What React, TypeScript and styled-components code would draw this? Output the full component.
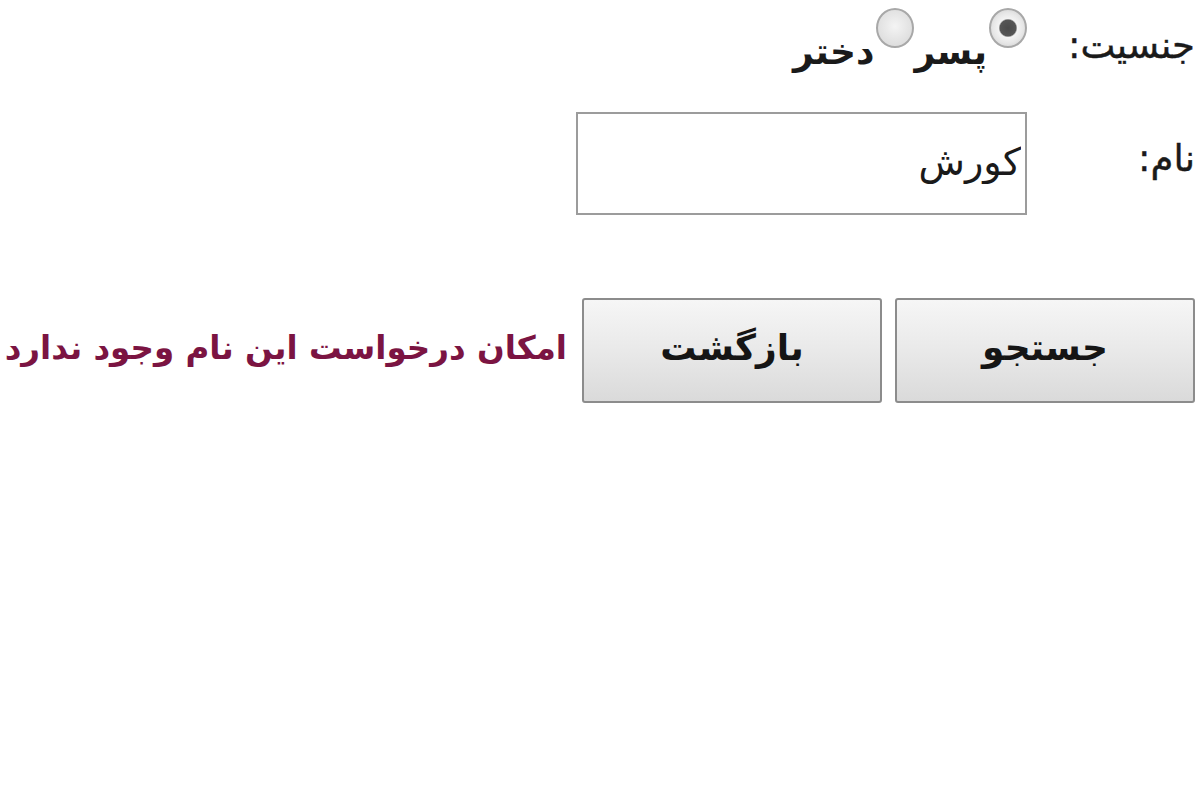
import styled, { createGlobalStyle } from 'styled-components';

const GlobalStyle = createGlobalStyle`
  html, body {
    margin: 0;
    padding: 0;
    background: #ffffff;
  }
  body {
    font-family: "DejaVu Sans", "Noto Sans", sans-serif;
    color: #1a1a1a;
  }
`;

const Form = styled.form`
  direction: rtl;
  width: 1200px;
  padding: 0 5px 0 0;
  box-sizing: border-box;
`;

const Row = styled.div<{ $height: number; $align?: string }>`
  display: grid;
  grid-template-columns: 168px auto;
  align-items: ${(p) => p.$align || 'center'};
  height: ${(p) => p.$height}px;
`;

const Label = styled.label<{ $top?: number }>`
  font-size: 37px;
  white-space: nowrap;
  padding-top: ${(p) => p.$top || 0}px;
  -webkit-text-stroke: 0.4px #1a1a1a;
`;

const Options = styled.div`
  display: flex;
  align-items: flex-start;
  padding-top: 8px;
`;

const Option = styled.label`
  display: flex;
  align-items: flex-start;
  font-size: 36px;
  font-weight: bold;
  line-height: 1;
  white-space: nowrap;
`;

const OptionText = styled.span`
  padding-top: 26px;
`;

const Radio = styled.input.attrs({ type: 'radio' })`
  appearance: none;
  margin: 0 0 0 2px;
  width: 38px;
  height: 40px;
  border-radius: 50%;
  border: 2px solid #a8a8a8;
  background: radial-gradient(circle at 50% 45%, #f4f4f4 0%, #dcdcdc 80%);
  box-sizing: border-box;

  &:checked {
    background: radial-gradient(
      circle,
      #4a4a4a 0,
      #555 32%,
      #f3f3f3 38%,
      #e6e6e6 62%,
      #c4c4c4 100%
    );
  }
`;

const TextBox = styled.input`
  width: 451px;
  height: 103px;
  box-sizing: border-box;
  border: 2px solid #9c9c9c;
  padding: 0 4px 2px;
  margin-top: 10px;
  font-family: "DejaVu Sans", sans-serif;
  font-size: 38px;
  color: #1a1a1a;
  direction: rtl;
  outline: none;
`;

const Actions = styled.div`
  display: flex;
  align-items: center;
  gap: 13px;
  margin-top: 78px;
`;

const Button = styled.button`
  flex-shrink: 0;
  width: 300px;
  height: 105px;
  font-family: "DejaVu Sans", sans-serif;
  font-size: 36px;
  font-weight: bold;
  color: #151515;
  border: 2px solid #8c8c8c;
  border-radius: 3px;
  background: linear-gradient(#f6f6f6, #e9e9e9 50%, #dadada);
  padding: 0 0 6px;
  cursor: pointer;
`;

const Message = styled.span`
  margin-right: 2px;
  font-size: 32.5px;
  font-weight: bold;
  color: #7b1442;
  white-space: nowrap;
  padding-bottom: 6px;
`;

export default function App() {
  return (
    <>
      <GlobalStyle />
      <Form onSubmit={(e) => e.preventDefault()}>
        <Row $height={96} $align="start">
          <Label $top={24}>جنسیت:</Label>
          <Options>
            <Option>
              <Radio name="gender" defaultChecked />
              <OptionText>پسر</OptionText>
            </Option>
            <Option>
              <Radio name="gender" />
              <OptionText>دختر</OptionText>
            </Option>
          </Options>
        </Row>
        <Row $height={124}>
          <Label>نام:</Label>
          <TextBox defaultValue="کورش" />
        </Row>
        <Actions>
          <Button type="submit">جستجو</Button>
          <Button type="button">بازگشت</Button>
          <Message>امکان درخواست این نام وجود ندارد</Message>
        </Actions>
      </Form>
    </>
  );
}
